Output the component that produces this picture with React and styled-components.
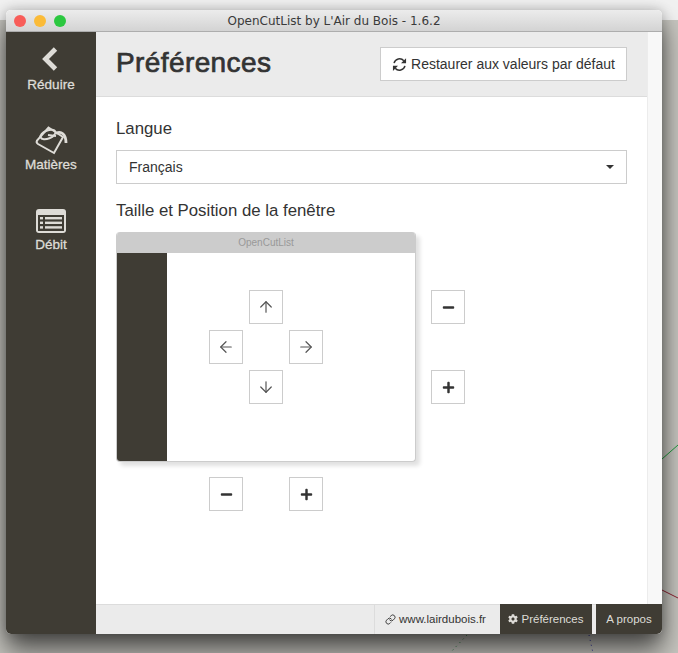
import React from 'react';
import styled, { createGlobalStyle } from 'styled-components';
import { FaCog, FaMinus, FaPlus } from 'react-icons/fa';
import { ArrowUp, ArrowDown, ArrowLeft, ArrowRight, Link } from 'lucide-react';

const Global = createGlobalStyle`
  html, body { margin: 0; padding: 0; }
  body {
    width: 678px;
    height: 653px;
    overflow: hidden;
    font-family: "Liberation Sans", Arial, sans-serif;
  }
`;

const Desktop = styled.div`
  position: relative;
  width: 678px;
  height: 653px;
  overflow: hidden;
  padding: 10px 16px 19px 6px;
  box-sizing: border-box;
  background: linear-gradient(#f1f1f1 20px, #c6c5bf 20px);
`;

const Guides = styled.svg`
  position: absolute;
  left: 0;
  top: 0;
  width: 678px;
  height: 653px;
`;

const Window = styled.div`
  position: relative;
  height: 624px;
  display: flex;
  flex-direction: column;
  border-radius: 5px;
  overflow: hidden;
  background: #fff;
`;

const WindowShadow = styled.div`
  position: relative;
  border-radius: 5px;
  box-shadow: 0 16px 26px rgba(0, 0, 0, 0.62), 0 0 12px rgba(0, 0, 0, 0.22);
`;

const TitleBar = styled.div`
  position: relative;
  flex: 0 0 22px;
  box-sizing: border-box;
  display: flex;
  align-items: center;
  justify-content: center;
  background: linear-gradient(#ececec, #d3d3d3);
  border-bottom: 1px solid #adadad;
  font-family: "DejaVu Sans", sans-serif;
  font-size: 12px;
  color: #3a3a3a;
`;

const Lights = styled.div`
  position: absolute;
  left: 8px;
  top: 5px;
  display: flex;
  gap: 8px;
`;

const Light = styled.span`
  width: 12px;
  height: 12px;
  border-radius: 50%;
  background: ${(p) => p.$color};
`;

const Body = styled.div`
  flex: 1;
  display: flex;
  min-height: 0;
`;

const Sidebar = styled.nav`
  flex: 0 0 90px;
  background: #3f3c34;
  display: flex;
  flex-direction: column;
  padding-top: 14px;
  box-sizing: border-box;
`;

const SideItem = styled.div`
  height: 80px;
  display: flex;
  flex-direction: column;
  align-items: center;
  color: #dedcd7;
  font-size: 13.5px;
  line-height: 15px;
  -webkit-text-stroke: 0.3px #dedcd7;
`;

const SideIcon = styled.svg`
  width: 40px;
  height: 30px;
  margin-bottom: 1px;
  display: block;
`;

const Main = styled.div`
  flex: 1;
  display: flex;
  flex-direction: column;
  min-width: 0;
`;

const Content = styled.div`
  flex: 1;
  display: flex;
  min-height: 0;
`;

const Page = styled.div`
  flex: 1;
  display: flex;
  flex-direction: column;
  min-width: 0;
`;

const Track = styled.div`
  flex: 0 0 15px;
  box-sizing: border-box;
  background: #f8f8f8;
  border-left: 1px solid #ececec;
`;

const Header = styled.header`
  flex: 0 0 65px;
  box-sizing: border-box;
  display: flex;
  align-items: center;
  justify-content: space-between;
  padding: 0 20px;
  background: #ebebeb;
  border-bottom: 1px solid #dcdcdc;
`;

const Title = styled.h1`
  margin: 0;
  font-size: 28px;
  font-weight: 400;
  letter-spacing: 0.4px;
  -webkit-text-stroke: 0.7px #333;
  color: #333;
  position: relative;
  top: -1px;
`;

const ResetButton = styled.button`
  width: 247px;
  height: 34px;
  box-sizing: border-box;
  display: flex;
  align-items: center;
  justify-content: center;
  gap: 4px;
  padding: 0;
  background: #fff;
  border: 1px solid #ccc;
  border-radius: 0;
  color: #333;
  font-family: inherit;
  font-size: 14px;
`;

const RefreshIcon = styled.svg`
  width: 15px;
  height: 15px;
  display: block;
`;

const Form = styled.div`
  padding: 23px 20px 0;
`;

const Label = styled.div`
  font-size: 16.8px;
  line-height: 18px;
  color: #333;
  margin-bottom: ${(p) => p.$gap}px;
`;

const Select = styled.div`
  height: 34px;
  box-sizing: border-box;
  display: flex;
  align-items: center;
  justify-content: space-between;
  padding: 0 12px;
  margin-bottom: 18px;
  background: #fff;
  border: 1px solid #ccc;
  font-size: 14px;
  color: #333;
`;

const Caret = styled.span`
  width: 0;
  height: 0;
  border-left: 4px solid transparent;
  border-right: 4px solid transparent;
  border-top: 4px solid #333;
`;

const Stage = styled.div`
  display: grid;
  grid-template-columns: 300px 34px;
  column-gap: 15px;
  row-gap: 15px;
`;

const Preview = styled.div`
  position: relative;
  height: 230px;
  box-sizing: border-box;
  display: flex;
  flex-direction: column;
  background: #fff;
  border: 1px solid #ccc;
  border-top: 0;
  border-radius: 4px;
  box-shadow: 4px 4px 4px rgba(0, 0, 0, 0.12);
  overflow: hidden;
`;

const PreviewBar = styled.div`
  flex: 0 0 21px;
  display: flex;
  align-items: center;
  justify-content: center;
  margin: 0 -1px;
  background: #ccc;
  color: #999;
  font-size: 10px;
`;

const PreviewSide = styled.div`
  position: absolute;
  left: 0;
  top: 21px;
  bottom: 0;
  width: 50px;
  background: #3f3c34;
`;

const MoveGrid = styled.div`
  display: grid;
  grid-template-columns: repeat(3, 34px);
  grid-auto-rows: 34px;
  gap: 6px;
  justify-content: center;
  padding-top: 37px;
`;

const SizeColumn = styled.div`
  display: grid;
  grid-auto-rows: 34px;
  gap: 6px;
  padding-top: 58px;
`;

const SizeRow = styled.div`
  display: grid;
  grid-template-columns: repeat(3, 34px);
  gap: 6px;
  justify-content: center;
`;

const Square = styled.button`
  grid-column: ${(p) => p.$col || 'auto'};
  grid-row: ${(p) => p.$row || 'auto'};
  width: 34px;
  height: 34px;
  box-sizing: border-box;
  display: flex;
  align-items: center;
  justify-content: center;
  padding: 0;
  background: #fff;
  border: 1px solid #ccc;
  border-radius: 0;
  color: #333;
`;

const Footer = styled.footer`
  flex: 0 0 30px;
  box-sizing: border-box;
  display: flex;
  justify-content: flex-end;
  background: #ebebeb;
  border-top: 1px solid #dcdcdc;
  font-size: 11.5px;
`;

const FootLink = styled.div`
  display: flex;
  align-items: center;
  gap: 3px;
  width: ${(p) => p.$w}px;
  box-sizing: border-box;
  justify-content: center;
  margin-left: ${(p) => p.$ml || 0}px;
  margin-top: -1px;
  padding-right: ${(p) => (p.$dark ? 0 : 3)}px;
  background: ${(p) => (p.$dark ? '#3f3c34' : 'transparent')};
  color: ${(p) => (p.$dark ? '#dedcd7' : '#333')};
  border-left: ${(p) => (p.$dark ? '0' : '1px solid #dcdcdc')};
`;

const moves = [
  { Icon: ArrowUp, col: 2, row: 1 },
  { Icon: ArrowLeft, col: 1, row: 2 },
  { Icon: ArrowRight, col: 3, row: 2 },
  { Icon: ArrowDown, col: 2, row: 3 },
];

export default function App() {
  return (
    <Desktop>
      <Global />
      <Guides viewBox="0 0 678 653">
        <path d="M662 459L678 445" stroke="#1f9a3c" fill="none" />
        <path d="M662 590L678 598" stroke="#8e2030" fill="none" />
        <path d="M467 635L450 653" stroke="#1f7a3c" strokeDasharray="1 4" fill="none" />
        <path d="M589 635L593 653" stroke="#2a2aa0" strokeDasharray="1 4" fill="none" />
      </Guides>
      <WindowShadow>
        <Window>
          <TitleBar>
            <Lights>
              <Light $color="#f85d59" />
              <Light $color="#fbbb38" />
              <Light $color="#2cc840" />
            </Lights>
            OpenCutList by L'Air du Bois - 1.6.2
          </TitleBar>
          <Body>
            <Sidebar>
              <SideItem>
                <SideIcon viewBox="0 0 40 30">
                  <path d="M24.5 3L14.5 13L24.5 23" fill="none" stroke="#dedcd7" strokeWidth="4.8" />
                </SideIcon>
                Réduire
              </SideItem>
              <SideItem>
                <SideIcon viewBox="0 0 40 30">
                  <g fill="none" stroke="#dedcd7" strokeWidth="2">
                    <path d="M17.5 1.5L32 11L23 27L7 18C5.5 17 5.5 15.5 6 14.5Z" />
                    <ellipse cx="17" cy="8.5" rx="8" ry="4" transform="rotate(-22 17 8.5)" />
                    <path d="M17 9L25 10" />
                    <path d="M25 7.5C30 4.5 35 8 35 17" strokeWidth="2.8" />
                  </g>
                </SideIcon>
                Matières
              </SideItem>
              <SideItem>
                <SideIcon viewBox="0 0 40 30">
                  <rect x="5" y="3" width="30" height="24" rx="3" fill="#dedcd7" />
                  <rect x="7" y="9" width="26" height="16" fill="#3f3c34" />
                  <g fill="#dedcd7">
                    <rect x="9" y="11" width="3" height="2.4" />
                    <rect x="14" y="11" width="17" height="2.4" />
                    <rect x="9" y="15.6" width="3" height="2.4" />
                    <rect x="14" y="15.6" width="17" height="2.4" />
                    <rect x="9" y="20.2" width="3" height="2.4" />
                    <rect x="14" y="20.2" width="17" height="2.4" />
                  </g>
                </SideIcon>
                Débit
              </SideItem>
            </Sidebar>
            <Main>
              <Content>
                <Page>
                  <Header>
                    <Title>Préférences</Title>
                    <ResetButton>
                      <RefreshIcon viewBox="0 0 16 16">
                        <path d="M2.2 6.5A6 6 0 0 1 12.6 4" fill="none" stroke="#333" strokeWidth="1.6" />
                        <path d="M15 1.2V6.6H9.6Z" fill="#333" />
                        <path d="M13.8 9.5A6 6 0 0 1 3.4 12" fill="none" stroke="#333" strokeWidth="1.6" />
                        <path d="M1 14.8V9.4H6.4Z" fill="#333" />
                      </RefreshIcon>
                      Restaurer aux valeurs par défaut
                    </ResetButton>
                  </Header>
                  <Form>
                    <Label $gap={12}>Langue</Label>
                    <Select>
                      Français
                      <Caret />
                    </Select>
                    <Label $gap={12}>Taille et Position de la fenêtre</Label>
                    <Stage>
                      <Preview>
                        <PreviewBar>OpenCutList</PreviewBar>
                        <PreviewSide />
                        <MoveGrid>
                          {moves.map(({ Icon, col, row }) => (
                            <Square key={`${col}-${row}`} $col={col} $row={row}>
                              <Icon size={18} strokeWidth={1.6} color="#555" />
                            </Square>
                          ))}
                        </MoveGrid>
                      </Preview>
                      <SizeColumn>
                        <Square><FaMinus size={13} /></Square>
                        <span />
                        <Square $row={3}><FaPlus size={13} /></Square>
                      </SizeColumn>
                      <SizeRow>
                        <Square $col={1}><FaMinus size={13} /></Square>
                        <Square $col={3}><FaPlus size={13} /></Square>
                      </SizeRow>
                    </Stage>
                  </Form>
                </Page>
                <Track />
              </Content>
              <Footer>
                <FootLink $w={125}>
                  <Link size={11} strokeWidth={2} />
                  www.lairdubois.fr
                </FootLink>
                <FootLink $dark $w={92} $ml={1}>
                  <FaCog size={10} />
                  Préférences
                </FootLink>
                <FootLink $dark $w={66} $ml={4}>A propos</FootLink>
              </Footer>
            </Main>
          </Body>
        </Window>
      </WindowShadow>
    </Desktop>
  );
}
